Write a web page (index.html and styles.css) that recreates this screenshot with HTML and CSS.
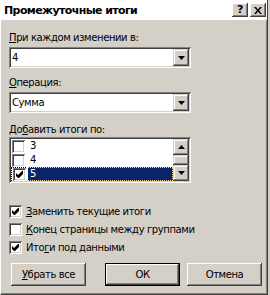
FILE: index.html
```html
<!DOCTYPE html>
<html lang="ru">
<head>
    <meta charset="UTF-8">
    <title>Промежуточные итоги</title>
    <link rel="stylesheet" href="styles.css">
</head>
<body>
    <div class="window">
        <div class="titlebar">
            <span class="title">Промежуточные итоги</span>
            <div class="caption-buttons">
                <span class="cap-btn help">?</span>
                <span class="cap-btn">
                    <svg width="8" height="7" viewBox="0 0 8 7"><path d="M0 0h2l2 2.5L6 0h2L5 3.5 8 7H6L4 4.5 2 7H0l3-3.5z" fill="#000"/></svg>
                </span>
            </div>
        </div>

        <div class="content">
            <div class="label"><u>П</u>ри каждом изменении в:</div>
            <div class="combo">
                <span class="combo-text">4</span>
                <span class="drop-btn"><svg width="7" height="4" viewBox="0 0 7 4"><path d="M0 0h7L3.5 4z" fill="#000"/></svg></span>
            </div>

            <div class="label label-gap"><u>О</u>перация:</div>
            <div class="combo">
                <span class="combo-text">Сумма</span>
                <span class="drop-btn"><svg width="7" height="4" viewBox="0 0 7 4"><path d="M0 0h7L3.5 4z" fill="#000"/></svg></span>
            </div>

            <div class="label label-gap2">До<u>б</u>авить итоги по:</div>
            <div class="listbox">
                <div class="items">
                    <div class="item"><span class="check"></span><span class="item-text">3</span></div>
                    <div class="item"><span class="check"></span><span class="item-text">4</span></div>
                    <div class="item selected">
                        <span class="check-cell"><span class="check checked">
                            <svg viewBox="0 0 7 7"><path d="M0 2L2 4L6 0H7V3L3 7H2L0 5Z" fill="#000"/></svg>
                        </span></span>
                        <span class="item-text">5</span>
                    </div>
                </div>
                <div class="scrollbar">
                    <span class="scroll-btn"><svg width="7" height="4" viewBox="0 0 7 4"><path d="M0 4h7L3.5 0z" fill="#000"/></svg></span>
                    <span class="thumb"></span>
                    <span class="scroll-btn"><svg width="7" height="4" viewBox="0 0 7 4"><path d="M0 0h7L3.5 4z" fill="#000"/></svg></span>
                </div>
            </div>

            <div class="options">
                <div class="option">
                    <span class="check checked"><svg viewBox="0 0 7 7"><path d="M0 2L2 4L6 0H7V3L3 7H2L0 5Z" fill="#000"/></svg></span>
                    <span><u>З</u>аменить текущие итоги</span>
                </div>
                <div class="option">
                    <span class="check"></span>
                    <span><u>К</u>онец страницы между группами</span>
                </div>
                <div class="option">
                    <span class="check checked"><svg viewBox="0 0 7 7"><path d="M0 2L2 4L6 0H7V3L3 7H2L0 5Z" fill="#000"/></svg></span>
                    <span>Ито<u>г</u>и под данными</span>
                </div>
            </div>

            <div class="buttons">
                <button class="btn"><u>У</u>брать все</button>
                <div class="btn-group">
                    <button class="btn default">ОК</button>
                    <button class="btn">Отмена</button>
                </div>
            </div>
        </div>
    </div>
</body>
</html>
```

FILE: styles.css
```css
body {
    margin: 0;
    background: #d4d0c8;
    font-family: "DejaVu Sans", sans-serif;
    font-size: 10px;
    letter-spacing: -0.4px;
    color: #000;
}

.window {
    width: 268px;
    height: 295px;
    box-sizing: border-box;
    border-left: 1px solid #fff;
    border-right: 1px solid #404040;
    border-bottom: 1px solid #404040;
    box-shadow: inset -1px -1px #808080;
    background: #d4d0c8;
}

.titlebar {
    height: 20px;
    background: #fff;
    display: flex;
    align-items: center;
    justify-content: space-between;
    padding: 0 1px 0 3px;
}

.title {
    font-weight: bold;
    font-size: 11px;
    letter-spacing: -0.6px;
}

.caption-buttons {
    display: flex;
    gap: 2px;
}

.cap-btn {
    width: 16px;
    height: 14px;
    box-sizing: border-box;
    display: flex;
    align-items: center;
    justify-content: center;
    background: #d4d0c8;
    box-shadow: inset -1px -1px #404040, inset 1px 1px #fff, inset -2px -2px #808080;
}

.cap-btn.help {
    font-weight: bold;
    font-size: 11px;
    line-height: 14px;
}

.content {
    padding: 11px 0 0 8px;
}

.label {
    height: 13px;
    line-height: 13px;
    margin-bottom: 3px;
}

.label-gap {
    margin-top: 8px;
}

.label-gap2 {
    margin-top: 10px;
    margin-bottom: 1px;
}

.combo {
    width: 182px;
    height: 21px;
    box-sizing: border-box;
    padding: 2px;
    display: flex;
    background: #fff;
    box-shadow: inset 1px 1px #808080, inset -1px -1px #fff, inset 2px 2px #404040, inset -2px -2px #d4d0c8;
}

.combo-text {
    flex: 1;
    line-height: 17px;
    padding-left: 1px;
}

.drop-btn,
.scroll-btn {
    width: 16px;
    height: 17px;
    box-sizing: border-box;
    display: flex;
    align-items: center;
    justify-content: center;
    background: #d4d0c8;
    box-shadow: inset -1px -1px #404040, inset 1px 1px #d4d0c8, inset -2px -2px #808080, inset 2px 2px #fff;
}

.listbox {
    width: 182px;
    height: 46px;
    box-sizing: border-box;
    padding: 2px;
    display: flex;
    background: #fff;
    box-shadow: inset 1px 1px #808080, inset -1px -1px #fff, inset 2px 2px #404040, inset -2px -2px #d4d0c8;
}

.items {
    flex: 1;
}

.item {
    height: 14px;
    display: flex;
    align-items: center;
    gap: 3px;
    padding-left: 1px;
}

.item-text {
    line-height: 14px;
    padding: 0 2px;
}

.item.selected {
    padding-left: 0;
    gap: 2px;
}

.check-cell {
    height: 14px;
    box-sizing: border-box;
    padding-left: 1px;
    display: flex;
    align-items: center;
    border: 1px dotted #000;
    border-right: none;
}

.item.selected .item-text {
    flex: 1;
    height: 14px;
    box-sizing: border-box;
    line-height: 12px;
    background: #0a246a;
    color: #fff;
    border: 1px dotted #f5db95;
    border-left: none;
}

.scrollbar {
    width: 16px;
    display: flex;
    flex-direction: column;
}

.scroll-btn {
    height: 16px;
}

.thumb {
    height: 10px;
    background: #d4d0c8;
    box-shadow: inset -1px -1px #404040, inset 1px 1px #d4d0c8, inset -2px -2px #808080, inset 2px 2px #fff;
}

.check {
    width: 13px;
    height: 13px;
    box-sizing: border-box;
    flex: none;
    display: flex;
    align-items: center;
    justify-content: center;
    background: #fff;
    box-shadow: inset 1px 1px #808080, inset -1px -1px #fff, inset 2px 2px #404040, inset -2px -2px #d4d0c8;
}

.check svg {
    width: 7px;
    height: 7px;
}

.options {
    margin-top: 22px;
}

.option {
    height: 13px;
    margin-bottom: 5px;
    display: flex;
    align-items: center;
    gap: 4px;
    line-height: 13px;
}

.buttons {
    display: flex;
    justify-content: space-between;
    margin-top: 9px;
    padding: 0 5px 0 2px;
}

.btn-group {
    display: flex;
    gap: 7px;
}

.btn {
    width: 75px;
    height: 23px;
    padding: 0;
    border: none;
    font-family: inherit;
    font-size: inherit;
    letter-spacing: inherit;
    color: #000;
    background: #d4d0c8;
    box-shadow: inset -1px -1px #404040, inset 1px 1px #fff, inset -2px -2px #808080, inset 2px 2px #d4d0c8;
}

.btn.default {
    border: 1px solid #000;
    box-shadow: inset -1px -1px #404040, inset 1px 1px #fff, inset -2px -2px #808080;
}
```
